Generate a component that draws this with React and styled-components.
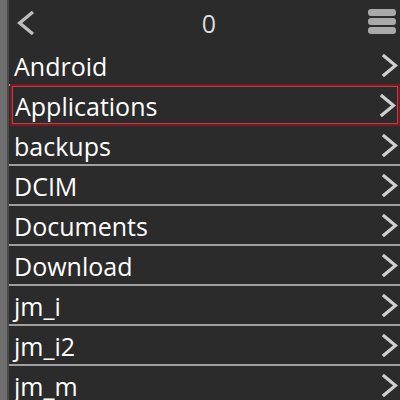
import React from 'react'
import styled, { createGlobalStyle } from 'styled-components'

const Global = createGlobalStyle`
  html, body {
    margin:0;
    padding:0;
    background:#2b2b2b;
    overflow:hidden;
  }
`

const Screen = styled.div`
    width:400px;
    height:400px;
    display:flex;
    background:#2b2b2b;
    font-family:"Open Sans", "DejaVu Sans", sans-serif;
    overflow:hidden;
`
const SideBar = styled.div`
    width:7px;
    flex:none;
    background:#6f6f6f;
    border-right:2px solid #4a4a4a;
`
const Main = styled.div`
    flex:1;
    display:flex;
    flex-direction:column;
    min-width:0;
`
const Header = styled.div`
    height:46px;
    flex:none;
    display:flex;
    align-items:center;
    justify-content:space-between;
    padding:0 4px 0 8px;
    position:relative;
`
const Title = styled.div`
    position:absolute;
    left:0;
    right:0;
    text-align:center;
    padding-left:9px;
    color:#dcdcdc;
    font-size:25px;
    line-height:46px;
    pointer-events:none;
`
const IconButton = styled.div`
    display:flex;
    align-items:center;
    justify-content:center;
    z-index:1;
`
const MenuBars = styled.div`
    display:flex;
    flex-direction:column;
    gap:2px;
    width:28px;
    margin-top:-3px;
`
const Bar = styled.span`
    display:block;
    height:7px;
    border-radius:3px;
    background:#a9a9a9;
`
const Row = styled.div`
    height:40px;
    flex:none;
    box-sizing:border-box;
    display:flex;
    align-items:center;
    justify-content:space-between;
    padding:0 2px 0 5px;
    color:#ffffff;
    font-size:25px;
    border-bottom:2px solid #a0a0a0;
    ${p => p.$selected && `
        margin-left:1px;
        padding-left:3px;
        border:2px solid #7c1820;
        box-shadow:inset 0 0 0 1px #b4444c;
        margin-top:-2px;
        height:42px;
    `}
`
const Name = styled.span`
    line-height:1;
    padding-top:3px;
`

const Chevron = ({ dir = 'right', size = 23, color = '#cfcfcf' }) => (
  <svg width={size * 0.7} height={size} viewBox="0 0 16 23">
    <polyline
      points={dir === 'right' ? '2,2 13.5,11.5 2,21' : '14,2 2.5,11.5 14,21'}
      fill="none"
      stroke={color}
      strokeWidth="3.2"
      strokeLinecap="square"
    />
  </svg>
)

const items = ['Android', 'Applications', 'backups', 'DCIM', 'Documents', 'Download', 'jm_i', 'jm_i2', 'jm_m']

const App = () => {
  return (
    <Screen>
      <Global />
      <SideBar />
      <Main>
        <Header>
          <IconButton>
            <Chevron dir="left" size={24} color="#bdbdbd" />
          </IconButton>
          <Title>0</Title>
          <IconButton>
            <MenuBars>
              <Bar />
              <Bar />
              <Bar />
            </MenuBars>
          </IconButton>
        </Header>
        {items.map(name => (
          <Row key={name} $selected={name === 'Applications'}>
            <Name>{name}</Name>
            <Chevron />
          </Row>
        ))}
      </Main>
    </Screen>
  )
}

export default App
